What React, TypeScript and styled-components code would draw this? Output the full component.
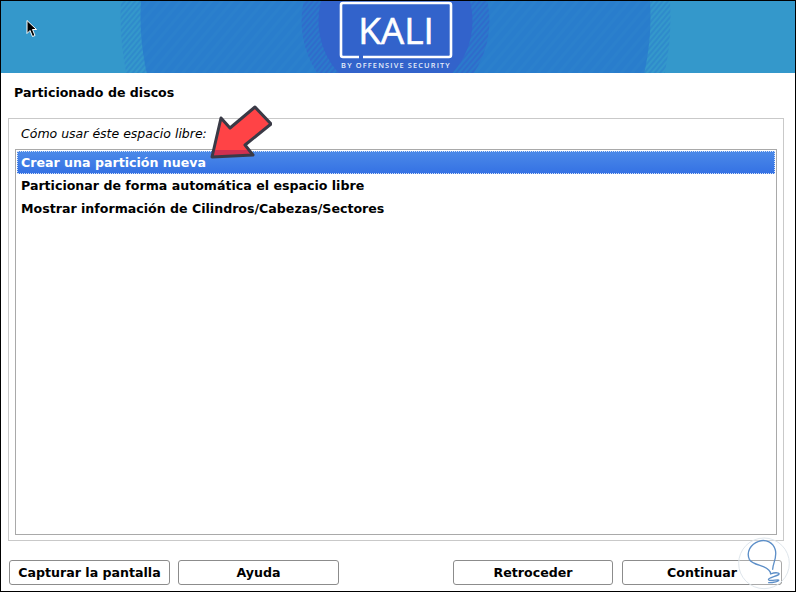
import styled, { createGlobalStyle } from "styled-components";

const GlobalStyle = createGlobalStyle`
  html, body {
    margin: 0;
    background: #fff;
  }
`;

const Screen = styled.div`
  position: relative;
  box-sizing: border-box;
  width: 796px;
  height: 592px;
  border: 1px solid #000;
  display: flex;
  flex-direction: column;
  overflow: hidden;
  background: #fff;
  font-family: "DejaVu Sans", sans-serif;
  font-size: 12.6px;
  color: #000;
`;

const Banner = styled.header`
  position: relative;
  flex: none;
  height: 72px;
  display: flex;
  justify-content: center;
  background: #3498cb;
  overflow: hidden;
`;

const BannerArt = styled.svg`
  position: absolute;
  inset: 0;
`;

const Logo = styled.svg`
  position: relative;
  display: block;
  margin-left: -5px;
`;

const Title = styled.h1`
  flex: none;
  height: 45px;
  margin: 0;
  padding: 12px 0 0 13px;
  box-sizing: border-box;
  font-size: 12.6px;
  line-height: 15px;
  font-weight: 700;
`;

const Frame = styled.section`
  flex: none;
  box-sizing: border-box;
  height: 423px;
  margin: 0 11px 0 7px;
  border: 1px solid #c9c9c9;
  padding: 0 6px 5px 6px;
  display: flex;
  flex-direction: column;
`;

const Prompt = styled.p`
  flex: none;
  margin: 0;
  height: 30px;
  padding: 7px 0 0 6px;
  box-sizing: border-box;
  font-size: 12.5px;
  font-style: italic;
  line-height: 15px;
`;

const List = styled.ul`
  flex: 1;
  margin: 0;
  padding: 1px;
  list-style: none;
  border: 1px solid #a9a9a9;
`;

const Row = styled.li<{ $selected?: boolean }>`
  box-sizing: border-box;
  height: 23px;
  padding-left: 4px;
  line-height: 24px;
  font-weight: 700;
  white-space: nowrap;
  color: ${(p) => (p.$selected ? "#fff" : "#000")};
  background: ${(p) =>
    p.$selected ? "linear-gradient(#4c8ae8, #3471e4)" : "transparent"};
  outline: ${(p) => (p.$selected ? "1px dotted #d5e2f8" : "none")};
  outline-offset: -1px;
`;

const Footer = styled.footer`
  flex: 1;
  display: flex;
  justify-content: space-between;
  padding: 19px 13px 0 8px;
`;

const ButtonGroup = styled.div<{ $gap: number; $cell: number }>`
  display: grid;
  grid-template-columns: repeat(2, ${(p) => p.$cell}px);
  gap: ${(p) => p.$gap}px;
`;

const Button = styled.button`
  box-sizing: border-box;
  height: 25px;
  padding: 0;
  border: 1px solid #8c8c8c;
  border-radius: 3px;
  background: #fff;
  color: #000;
  font-family: inherit;
  font-size: 12.6px;
  font-weight: 700;
`;

const Cursor = styled.svg`
  position: absolute;
  left: 24px;
  top: 18px;
`;

const Arrow = styled.svg`
  position: absolute;
  left: 199px;
  top: 99px;
`;

const Watermark = styled.svg`
  position: absolute;
  left: 729px;
  top: 529px;
`;

export default function App() {
  return (
    <Screen>
      <GlobalStyle />
      <Banner>
        <BannerArt width="794" height="72" viewBox="0 0 794 72">
          <defs>
            <pattern
              id="outerHatch"
              width="4"
              height="4"
              patternUnits="userSpaceOnUse"
              patternTransform="rotate(40)"
            >
              <rect width="4" height="4" fill="#2f8bcb" />
              <rect width="2" height="4" fill="#3498cb" />
            </pattern>
            <pattern
              id="innerHatch"
              width="4"
              height="4"
              patternUnits="userSpaceOnUse"
              patternTransform="rotate(40)"
            >
              <rect width="4" height="4" fill="#2f6ccb" />
              <rect width="2" height="4" fill="#2b7acb" />
            </pattern>
            <pattern
              id="midHatch"
              width="8"
              height="8"
              patternUnits="userSpaceOnUse"
              patternTransform="rotate(40)"
            >
              <rect width="8" height="8" fill="#297dcc" />
              <rect width="3" height="8" fill="#2b80cc" />
            </pattern>
          </defs>
          <circle cx="394.5" cy="16" r="275" fill="url(#outerHatch)" />
          <circle cx="394.5" cy="16" r="255" fill="url(#midHatch)" />
          <circle cx="394.5" cy="20" r="94" fill="url(#innerHatch)" />
          <circle cx="394.5" cy="20" r="77" fill="#3263cb" />
        </BannerArt>
        <Logo width="116" height="72" viewBox="0 0 116 72">
          <path
            d="M21 56 H5 a2 2 0 0 1 -2 -2 V4 a2 2 0 0 1 2 -2 H111 a2 2 0 0 1 2 2 V54 a2 2 0 0 1 -2 2 H25"
            fill="none"
            stroke="#fff"
            strokeWidth="2.6"
          />
          <text
            x="58"
            y="43"
            textAnchor="middle"
            fill="#fff"
            stroke="#fff"
            strokeWidth="0.6"
            fontFamily="'Open Sans', sans-serif"
            fontSize="37"
          >
            KALI
          </text>
          <text
            x="58"
            y="67"
            textAnchor="middle"
            fill="#e6eefa"
            fontFamily="'Open Sans', sans-serif"
            fontSize="7.4"
            fontWeight="600"
            letterSpacing="1.15"
          >
            BY OFFENSIVE SECURITY
          </text>
        </Logo>
      </Banner>
      <Title>Particionado de discos</Title>
      <Frame>
        <Prompt>Cómo usar éste espacio libre:</Prompt>
        <List>
          <Row $selected>Crear una partición nueva</Row>
          <Row>Particionar de forma automática el espacio libre</Row>
          <Row>Mostrar información de Cilindros/Cabezas/Sectores</Row>
        </List>
      </Frame>
      <Footer>
        <ButtonGroup $gap={8} $cell={161}>
          <Button>Capturar la pantalla</Button>
          <Button>Ayuda</Button>
        </ButtonGroup>
        <ButtonGroup $gap={9} $cell={160}>
          <Button>Retroceder</Button>
          <Button>Continuar</Button>
        </ButtonGroup>
      </Footer>
      <Cursor width="14" height="20" viewBox="0 0 14 20">
        <path
          d="M2 1.5 V14.5 L5 11.5 L7.5 17.5 L10 16.5 L7.5 10.5 H11.5 Z"
          fill="#000"
          stroke="#fff"
          strokeWidth="1"
        />
      </Cursor>
      <Arrow width="72" height="64" viewBox="195 100 72 64">
        <path
          d="M207 157 L216 118 L225 128 L250 107 L266 124 L240 145 L248 155 Z"
          fill="#ff4346"
        />
        <path d="M208.6 150 H244 L248 155 L207 157 Z" fill="#cf3050" />
        <path
          d="M207 157 L216 118 L225 128 L250 107 L266 124 L240 145 L248 155 Z"
          fill="none"
          stroke="#3a3a46"
          strokeWidth="3"
          strokeLinejoin="round"
        />
      </Arrow>
      <Watermark width="66" height="62" viewBox="0 0 198 186">
        <circle
          cx="102"
          cy="100"
          r="76"
          fill="#fff"
          fillOpacity="0.25"
          stroke="#dfe6ec"
          strokeWidth="3"
        />
        <path
          d="M128 118 C128 100 142 84 136 60 C130 38 108 26 86 34 C62 42 48 66 58 88 C64 100 84 104 100 110 C114 116 122 124 122 132 C136 126 152 128 146 134 C136 140 112 144 116 150 C122 154 142 148 146 150 C148 154 130 158 116 158"
          fill="none"
          stroke="#5d8fc8"
          strokeWidth="4"
          strokeLinecap="round"
          strokeLinejoin="round"
        />
      </Watermark>
    </Screen>
  );
}
